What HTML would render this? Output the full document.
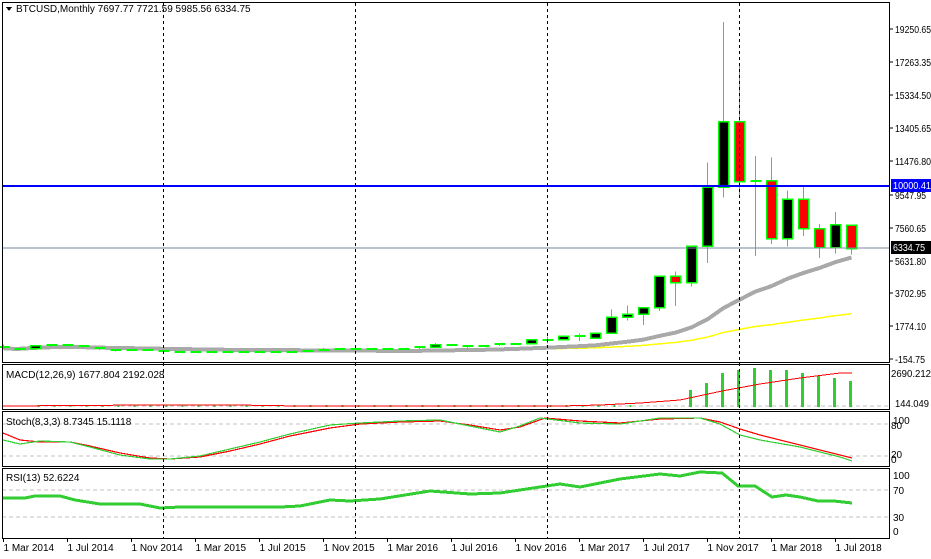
<!DOCTYPE html>
<html><head><meta charset="utf-8"><style>
html,body{margin:0;padding:0;background:#fff;width:931px;height:559px;overflow:hidden}
svg{display:block}
text{font-family:"Liberation Sans",sans-serif;font-size:10px;fill:#000}
</style></head><body>
<svg id="s" width="931" height="559" xmlns="http://www.w3.org/2000/svg" shape-rendering="crispEdges"></svg>
<script>
var d=[[560,700,440,450],[450,540,340,445],[445,630,420,625],[625,680,550,640],[640,650,565,585],[585,600,430,480],[480,490,365,387],[387,415,280,338],[338,460,310,378],[378,380,310,320],
[320,320,165,217],[217,265,200,255],[255,300,240,245],[245,260,215,236],[236,250,225,230],[230,265,220,263],[263,318,255,285],[285,285,200,230],[230,245,225,236],[236,330,235,314],[314,500,310,377],[377,465,345,430],
[430,460,350,369],[369,445,365,437],[437,440,395,416],[416,465,415,448],[448,550,440,530],[530,780,530,673],[673,705,605,624],[624,625,470,575],[575,630,590,609],[609,740,605,700],[700,755,690,745],[745,985,740,963],
[963,1160,750,970],[970,1210,920,1190],[1190,1350,890,1080],[1080,1400,1070,1350],[1350,2760,1330,2300],[2300,2990,2100,2480],[2480,2900,1830,2870],[2870,4740,2680,4700],[4700,4990,2950,4340],[4340,6470,4100,6470],[6470,11400,5500,9950],[9950,19660,9350,13800],
[13800,17250,9300,10280],[10280,11780,5900,10330],[10330,11700,6600,6930],[6930,9760,6460,9240],[9240,10000,7080,7490],[7490,7770,5780,6390],[6390,8500,6060,7730],[7700,7720,5985,6335]];
function X(i){return 3.5+16*i}
function Y(p){return 359-(p+154.75)/58.8}
var o='';
function L(x1,y1,x2,y2,c,w,da){o+='<line x1="'+x1+'" y1="'+y1+'" x2="'+x2+'" y2="'+y2+'" stroke="'+c+'" stroke-width="'+(w||1)+'"'+(da?' stroke-dasharray="'+da+'"':'')+'/>';}
function P(pts,c,w){o+='<polyline fill="none" stroke="'+c+'" stroke-width="'+w+'" points="'+pts+'"/>';}
function T(x,y,t,extra){o+='<text x="'+x+'" y="'+y+'"'+(extra||'')+'>'+t+'</text>';}
function sma(n){var s='';for(var i=0;i<d.length;i++){var a=0,c=0;for(var j=Math.max(0,i-n+1);j<=i;j++){a+=d[j][3];c++;}var v=a/c;if(n==50)v=v*0.97;s+=X(i)+','+Y(v).toFixed(1)+' ';}return s;}
P(sma(50),'#ffff00',1.5);
P(sma(20),'#a9a9a9',4);
for(var i=0;i<d.length;i++){var c=d[i],x=X(i);var t=Y(Math.max(c[0],c[3])),b=Y(Math.min(c[0],c[3]));
L(x,Y(c[1]),x,Y(c[2]),'#00ff00',1);
if(b-t<2){L(x-5,Math.round(t),x+6,Math.round(t),'#00ff00',2);}
else o+='<rect x="'+(x-5)+'" y="'+t+'" width="10" height="'+(b-t)+'" fill="'+(c[3]>=c[0]?'#000':'#ff0000')+'" stroke="#00ff00" stroke-width="1.5"/>';}
L(2,186,889,186,'#0000ff',2);
L(2,248,889,248,'#778899',1);
var mb=[[690,390],[706,383],[722,373],[738,370],[754,368],[770,370],[786,370],[802,373],[818,376],[834,378],[850,381]];
L(2,406,889,406,'#c0c0c0',1,'4,3');
for(var k=0;k<mb.length;k++)o+='<rect x="'+(mb[k][0]-1)+'" y="'+mb[k][1]+'" width="3" height="'+(407-mb[k][1])+'" fill="#32cd32"/>';
for(var k=2;k<40;k++)o+='<rect x="'+(X(k)+2)+'" y="405" width="2" height="2" fill="#32cd32"/>';
P('3,406 150,405 235,405 300,406 560,406 600,405 640,403 680,400 722,391 760,384 800,378 840,373 852,373','#ff0000',1);
L(2,424,889,424,'#c0c0c0',1,'4,3');L(2,456,889,456,'#c0c0c0',1,'4,3');
P('3,433 20,440 40,442 70,442 90,446 120,453 150,458 170,459 200,457 230,451 260,444 290,436 330,428 360,424 400,422 440,421 470,425 500,430 520,427 545,418 580,421 620,423 660,419 700,418 720,422 740,429 760,435 800,445 840,455 852,458','#ff0000',1.2);
P('3,440 20,444 40,441 70,442 90,447 120,455 150,459 170,459 200,456 230,449 260,442 290,434 330,425 360,423 400,421 440,420 470,426 500,432 520,426 540,418 580,423 620,424 660,418 700,418 720,424 740,435 760,440 800,447 840,457 852,461','#32cd32',1.2);
L(2,490,889,490,'#c0c0c0',1,'4,3');L(2,517,889,517,'#c0c0c0',1,'4,3');
P('3,498 25,498 35,496 60,496 75,500 100,504 140,504 160,508 180,507 280,507 300,506 330,500 350,501 380,499 430,491 470,494 500,493 540,487 560,484 580,487 620,479 660,474 680,476 700,472 722,473 738,486 755,486 772,497 786,495 800,497 818,501 834,501 852,503','#32cd32',3);
[163.5,355.5,547.5,739.5].forEach(function(x){L(x,3,x,538,'#000',1,'3,3');});
o+='<rect x="2.5" y="2.5" width="887" height="360" fill="none" stroke="#000"/>';
o+='<rect x="2.5" y="364.5" width="887" height="45" fill="none" stroke="#000"/>';
o+='<rect x="2.5" y="411.5" width="887" height="55" fill="none" stroke="#000"/>';
o+='<rect x="2.5" y="468.5" width="887" height="70" fill="none" stroke="#000"/>';
var AX=' textLength="36" lengthAdjust="spacingAndGlyphs"';
[['19250.65',29],['17263.35',62],['15334.50',95],['13405.65',128],['11476.80',161],['9547.95',195,31],['7560.65',228,31],['5631.80',261,31],['3702.95',293,31],['1774.10',326,31],['-154.75',359,30]].forEach(function(a){L(890,a[1],893,a[1],'#000',1);T(895,a[1]+4,a[0],' textLength="'+(a[2]||36)+'" lengthAdjust="spacingAndGlyphs"');});
o+='<rect x="891" y="179" width="40" height="13" fill="#0000ff"/>';T(893,189,'10000.41',' style="fill:#fff" textLength="38" lengthAdjust="spacingAndGlyphs"');
o+='<rect x="891" y="241" width="40" height="13" fill="#000"/>';T(893,251,'6334.75',' style="fill:#fff" textLength="32" lengthAdjust="spacingAndGlyphs"');
T(891,377,'2690.212',' textLength="40" lengthAdjust="spacingAndGlyphs"');T(895,407,'144.049',' textLength="34" lengthAdjust="spacingAndGlyphs"');
T(893,424,'100');T(891,429,'80');T(891,458,'20');T(891,463,'0');
T(893,479,'100');T(893,494,'70');T(893,521,'30');T(893,535,'0');
var lb=['1 Mar 2014','1 Jul 2014','1 Nov 2014','1 Mar 2015','1 Jul 2015','1 Nov 2015','1 Mar 2016','1 Jul 2016','1 Nov 2016','1 Mar 2017','1 Jul 2017','1 Nov 2017','1 Mar 2018','1 Jul 2018'];
for(var k=0;k<lb.length;k++){var x=3.5+64*k;L(x,538,x,542,'#000',1);T(x,551,lb[k]);}
o+='<polygon points="6,7 12,7 9,11" fill="#000"/>';
T(16,12,'BTCUSD,Monthly  7697.77 7721.59 5985.56 6334.75');
T(6,378,'MACD(12,26,9) 1677.804 2192.028');
T(6,425,'Stoch(8,3,3) 8.7345 15.1118');
T(6,481,'RSI(13) 52.6224');
document.getElementById('s').innerHTML=o;
</script>
</body></html>
